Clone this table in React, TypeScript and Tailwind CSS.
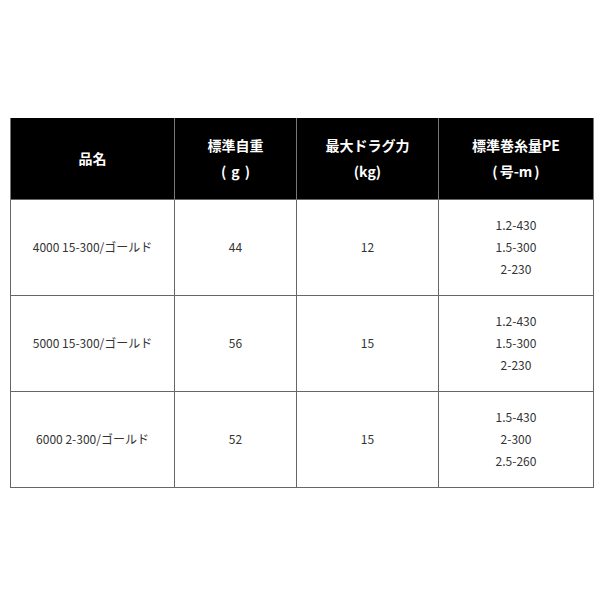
const rows = [
  { name: "4000 15-300/ゴールド", weight: "44", drag: "12", line: ["1.2-430", "1.5-300", "2-230"] },
  { name: "5000 15-300/ゴールド", weight: "56", drag: "15", line: ["1.2-430", "1.5-300", "2-230"] },
  { name: "6000 2-300/ゴールド", weight: "52", drag: "15", line: ["1.5-430", "2-300", "2.5-260"] },
];

export default function App() {
  return (
    <div
      className="w-[605px] h-[605px] bg-white pt-[118px] pl-[10px]"
      style={{ fontFamily: '"Noto Sans CJK JP", "Noto Sans", sans-serif' }}
    >
      <table className="border-collapse table-fixed w-[583px] text-center">
        <colgroup>
          <col className="w-[164px]" />
          <col className="w-[122px]" />
          <col className="w-[142px]" />
          <col className="w-[155px]" />
        </colgroup>
        <thead>
          <tr className="h-[81px] bg-black text-white text-[14px] font-bold leading-[26px]">
            <th className="border-x border-[#777] font-bold">品名</th>
            <th className="border-x border-[#777] font-bold">
              <div>標準自重</div>
              <div className="flex justify-center">
                <span className="pr-[5px]">(</span>g<span className="pl-[5px]">)</span>
              </div>
            </th>
            <th className="border-x border-[#777] font-bold">
              <div>最大ドラグ力</div>
              <div>(kg)</div>
            </th>
            <th className="border-x border-[#777] font-bold">
              <div>標準巻糸量PE</div>
              <div className="flex justify-center">
                <span className="pr-[2px]">(</span>号-m<span className="pl-[2px]">)</span>
              </div>
            </th>
          </tr>
        </thead>
        <tbody className="text-[12px] text-[#333] leading-[22px]">
          {rows.map((r) => (
            <tr key={r.name} className="h-[96px]">
              <td className="border border-[#666]">{r.name}</td>
              <td className="border border-[#666]">{r.weight}</td>
              <td className="border border-[#666]">{r.drag}</td>
              <td className="border border-[#666]">
                {r.line.map((l) => (
                  <div key={l}>{l}</div>
                ))}
              </td>
            </tr>
          ))}
        </tbody>
      </table>
    </div>
  );
}
